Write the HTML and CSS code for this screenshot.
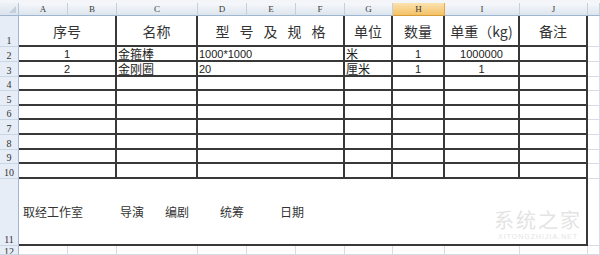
FILE: index.html
```html
<!DOCTYPE html>
<html lang="zh-CN">

<head>
    <meta charset="UTF-8">
    <meta name="viewport" content="width=device-width, initial-scale=1.0">
    <title>道具清单</title>

    <link rel="stylesheet" href="styles.css">
</head>

<body>
<div class="sheet">
    <!-- 列标题 -->
    <div class="corner"></div>
    <div class="col-head">A</div>
    <div class="col-head">B</div>
    <div class="col-head">C</div>
    <div class="col-head">D</div>
    <div class="col-head">E</div>
    <div class="col-head">F</div>
    <div class="col-head">G</div>
    <div class="col-head selected">H</div>
    <div class="col-head">I</div>
    <div class="col-head">J</div>
    <div class="col-head"></div>

    <!-- 1 -->
    <div class="row-head">1</div>
    <div class="cell box span-2 center title">序号</div>
    <div class="cell box center title">名称</div>
    <div class="cell box span-3 center title spaced">型号及规格</div>
    <div class="cell box center title">单位</div>
    <div class="cell box center title">数量</div>
    <div class="cell box center title">单重（kg)</div>
    <div class="cell box center title">备注</div>
    <div class="cell grid"></div>

    <!-- 2 -->
    <div class="row-head">2</div>
    <div class="cell box span-2 center num">1</div>
    <div class="cell box">金箍棒</div>
    <div class="cell box span-3 num">1000*1000</div>
    <div class="cell box">米</div>
    <div class="cell box center num">1</div>
    <div class="cell box center num">1000000</div>
    <div class="cell box"></div>
    <div class="cell grid"></div>

    <!-- 3 -->
    <div class="row-head">3</div>
    <div class="cell box span-2 center num">2</div>
    <div class="cell box">金刚圈</div>
    <div class="cell box span-3 num">20</div>
    <div class="cell box">厘米</div>
    <div class="cell box center num">1</div>
    <div class="cell box center num">1</div>
    <div class="cell box"></div>
    <div class="cell grid"></div>

    <!-- 4 ~ 10 -->
    <div class="row-head">4</div>
    <div class="cell box span-2"></div><div class="cell box"></div><div class="cell box span-3"></div><div class="cell box"></div><div class="cell box"></div><div class="cell box"></div><div class="cell box"></div><div class="cell grid"></div>
    <div class="row-head">5</div>
    <div class="cell box span-2"></div><div class="cell box"></div><div class="cell box span-3"></div><div class="cell box"></div><div class="cell box"></div><div class="cell box"></div><div class="cell box"></div><div class="cell grid"></div>
    <div class="row-head">6</div>
    <div class="cell box span-2"></div><div class="cell box"></div><div class="cell box span-3"></div><div class="cell box"></div><div class="cell box"></div><div class="cell box"></div><div class="cell box"></div><div class="cell grid"></div>
    <div class="row-head">7</div>
    <div class="cell box span-2"></div><div class="cell box"></div><div class="cell box span-3"></div><div class="cell box"></div><div class="cell box"></div><div class="cell box"></div><div class="cell box"></div><div class="cell grid"></div>
    <div class="row-head">8</div>
    <div class="cell box span-2"></div><div class="cell box"></div><div class="cell box span-3"></div><div class="cell box"></div><div class="cell box"></div><div class="cell box"></div><div class="cell box"></div><div class="cell grid"></div>
    <div class="row-head">9</div>
    <div class="cell box span-2"></div><div class="cell box"></div><div class="cell box span-3"></div><div class="cell box"></div><div class="cell box"></div><div class="cell box"></div><div class="cell box"></div><div class="cell grid"></div>
    <div class="row-head">10</div>
    <div class="cell box span-2"></div><div class="cell box"></div><div class="cell box span-3"></div><div class="cell box"></div><div class="cell box"></div><div class="cell box"></div><div class="cell box"></div><div class="cell grid"></div>

    <!-- 11 -->
    <div class="row-head">11</div>
    <div class="cell box span-10 footer">
        <span>取经工作室</span>
        <span class="gap-37">导演</span>
        <span class="gap-21">编剧</span>
        <span class="gap-31">统筹</span>
        <span class="gap-36">日期</span>
    </div>
    <div class="cell grid"></div>

    <!-- 12 -->
    <div class="row-head">12</div>
    <div class="cell grid"></div><div class="cell grid"></div><div class="cell grid"></div><div class="cell grid"></div><div class="cell grid"></div><div class="cell grid"></div><div class="cell grid"></div><div class="cell grid"></div><div class="cell grid"></div><div class="cell grid"></div><div class="cell grid"></div>

    <div class="watermark">
        <span class="wm-name">系统之家</span>
        <span class="wm-url">XITONGZHIJIA.NET</span>
    </div>
</div>
</body>

</html>
```

FILE: styles.css
```css
html, body {
    margin: 0;
    padding: 0;
    background-color: #fff;
}

body {
    width: 600px;
    height: 255px;
    overflow: hidden;
    padding-top: 3px;
    box-sizing: border-box;
    background-color: #f3f5f8;
}

.sheet {
    position: relative;
    display: grid;
    grid-template-columns: 19px 49px 49px 81px 49px 49px 49px 48px 52px 75px 68px 1fr;
    grid-template-rows: 13px 31px 15px 15px 14px 15px 14px 15px 15px 14px 15px 67px 9px;
    width: 600px;
    background-color: #fff;
    font-family: "Noto Sans CJK SC", sans-serif;
    color: #222;
}

.corner {
    display: flex;
    justify-content: flex-end;
    align-items: flex-end;
    padding: 0 2px 2px 0;
    background: linear-gradient(#eef2f7, #dbe3ed);
    border-right: 1px solid #b6c6d8;
    border-bottom: 1px solid #9eb6ce;
    box-sizing: border-box;
}

.corner::after {
    content: "";
    border-left: 7px solid transparent;
    border-bottom: 7px solid #c4cfdb;
}

.col-head {
    display: flex;
    align-items: center;
    justify-content: center;
    background: linear-gradient(#f6f8fb, #dde5ee);
    border-right: 1px solid #c3d0de;
    border-bottom: 1px solid #9eb6ce;
    box-sizing: border-box;
    font-family: "Liberation Serif", serif;
    font-size: 9px;
    color: #3b3b3b;
}

.col-head.selected {
    background: linear-gradient(#fbe2ae, #f3c266);
    border-right-color: #e2a84a;
    border-bottom-color: #d99a3a;
}

.row-head {
    display: flex;
    align-items: flex-end;
    justify-content: center;
    overflow: hidden;
    background-color: #e6edf6;
    border-right: 1px solid #9eb6ce;
    border-bottom: 1px solid #c9d6e5;
    box-sizing: border-box;
    font-family: "Liberation Serif", serif;
    font-size: 10px;
    line-height: 11px;
    color: #333;
}

.row-head:nth-last-child(13) {
    align-items: flex-start;
}

.cell {
    display: flex;
    align-items: center;
    box-sizing: border-box;
    padding-left: 1px;
    font-size: 12px;
    line-height: 12px;
    white-space: nowrap;
}

.cell.box {
    border-right: 2px solid #383838;
    border-bottom: 2px solid #383838;
}

.cell.grid {
    border-right: 1px solid #d6dde8;
    border-bottom: 1px solid #d6dde8;
}

.cell.center {
    justify-content: center;
    padding-left: 0;
}

.span-2 {
    grid-column: span 2;
}

.span-3 {
    grid-column: span 3;
}

.span-10 {
    grid-column: span 10;
}

.title {
    font-size: 14px;
    line-height: 16px;
    color: #333;
}

.spaced {
    letter-spacing: 10px;
    text-indent: 10px;
}

.num {
    font-family: "Liberation Sans", sans-serif;
    font-size: 11px;
}

.footer {
    padding-left: 4px;
    font-size: 12px;
    color: #333;
}

.gap-37 {
    margin-left: 37px;
}

.gap-36 {
    margin-left: 36px;
}

.gap-31 {
    margin-left: 31px;
}

.gap-21 {
    margin-left: 21px;
}

/* 右下角水印 */
.watermark {
    position: absolute;
    left: 494px;
    top: 205px;
    display: flex;
    flex-direction: column;
    align-items: center;
    color: #e4e4e4;
    pointer-events: none;
}

.wm-name {
    font-size: 20px;
    line-height: 24px;
    letter-spacing: 2px;
}

.wm-url {
    font-family: "Liberation Sans", sans-serif;
    font-size: 7px;
    line-height: 9px;
    letter-spacing: 1px;
}
```
